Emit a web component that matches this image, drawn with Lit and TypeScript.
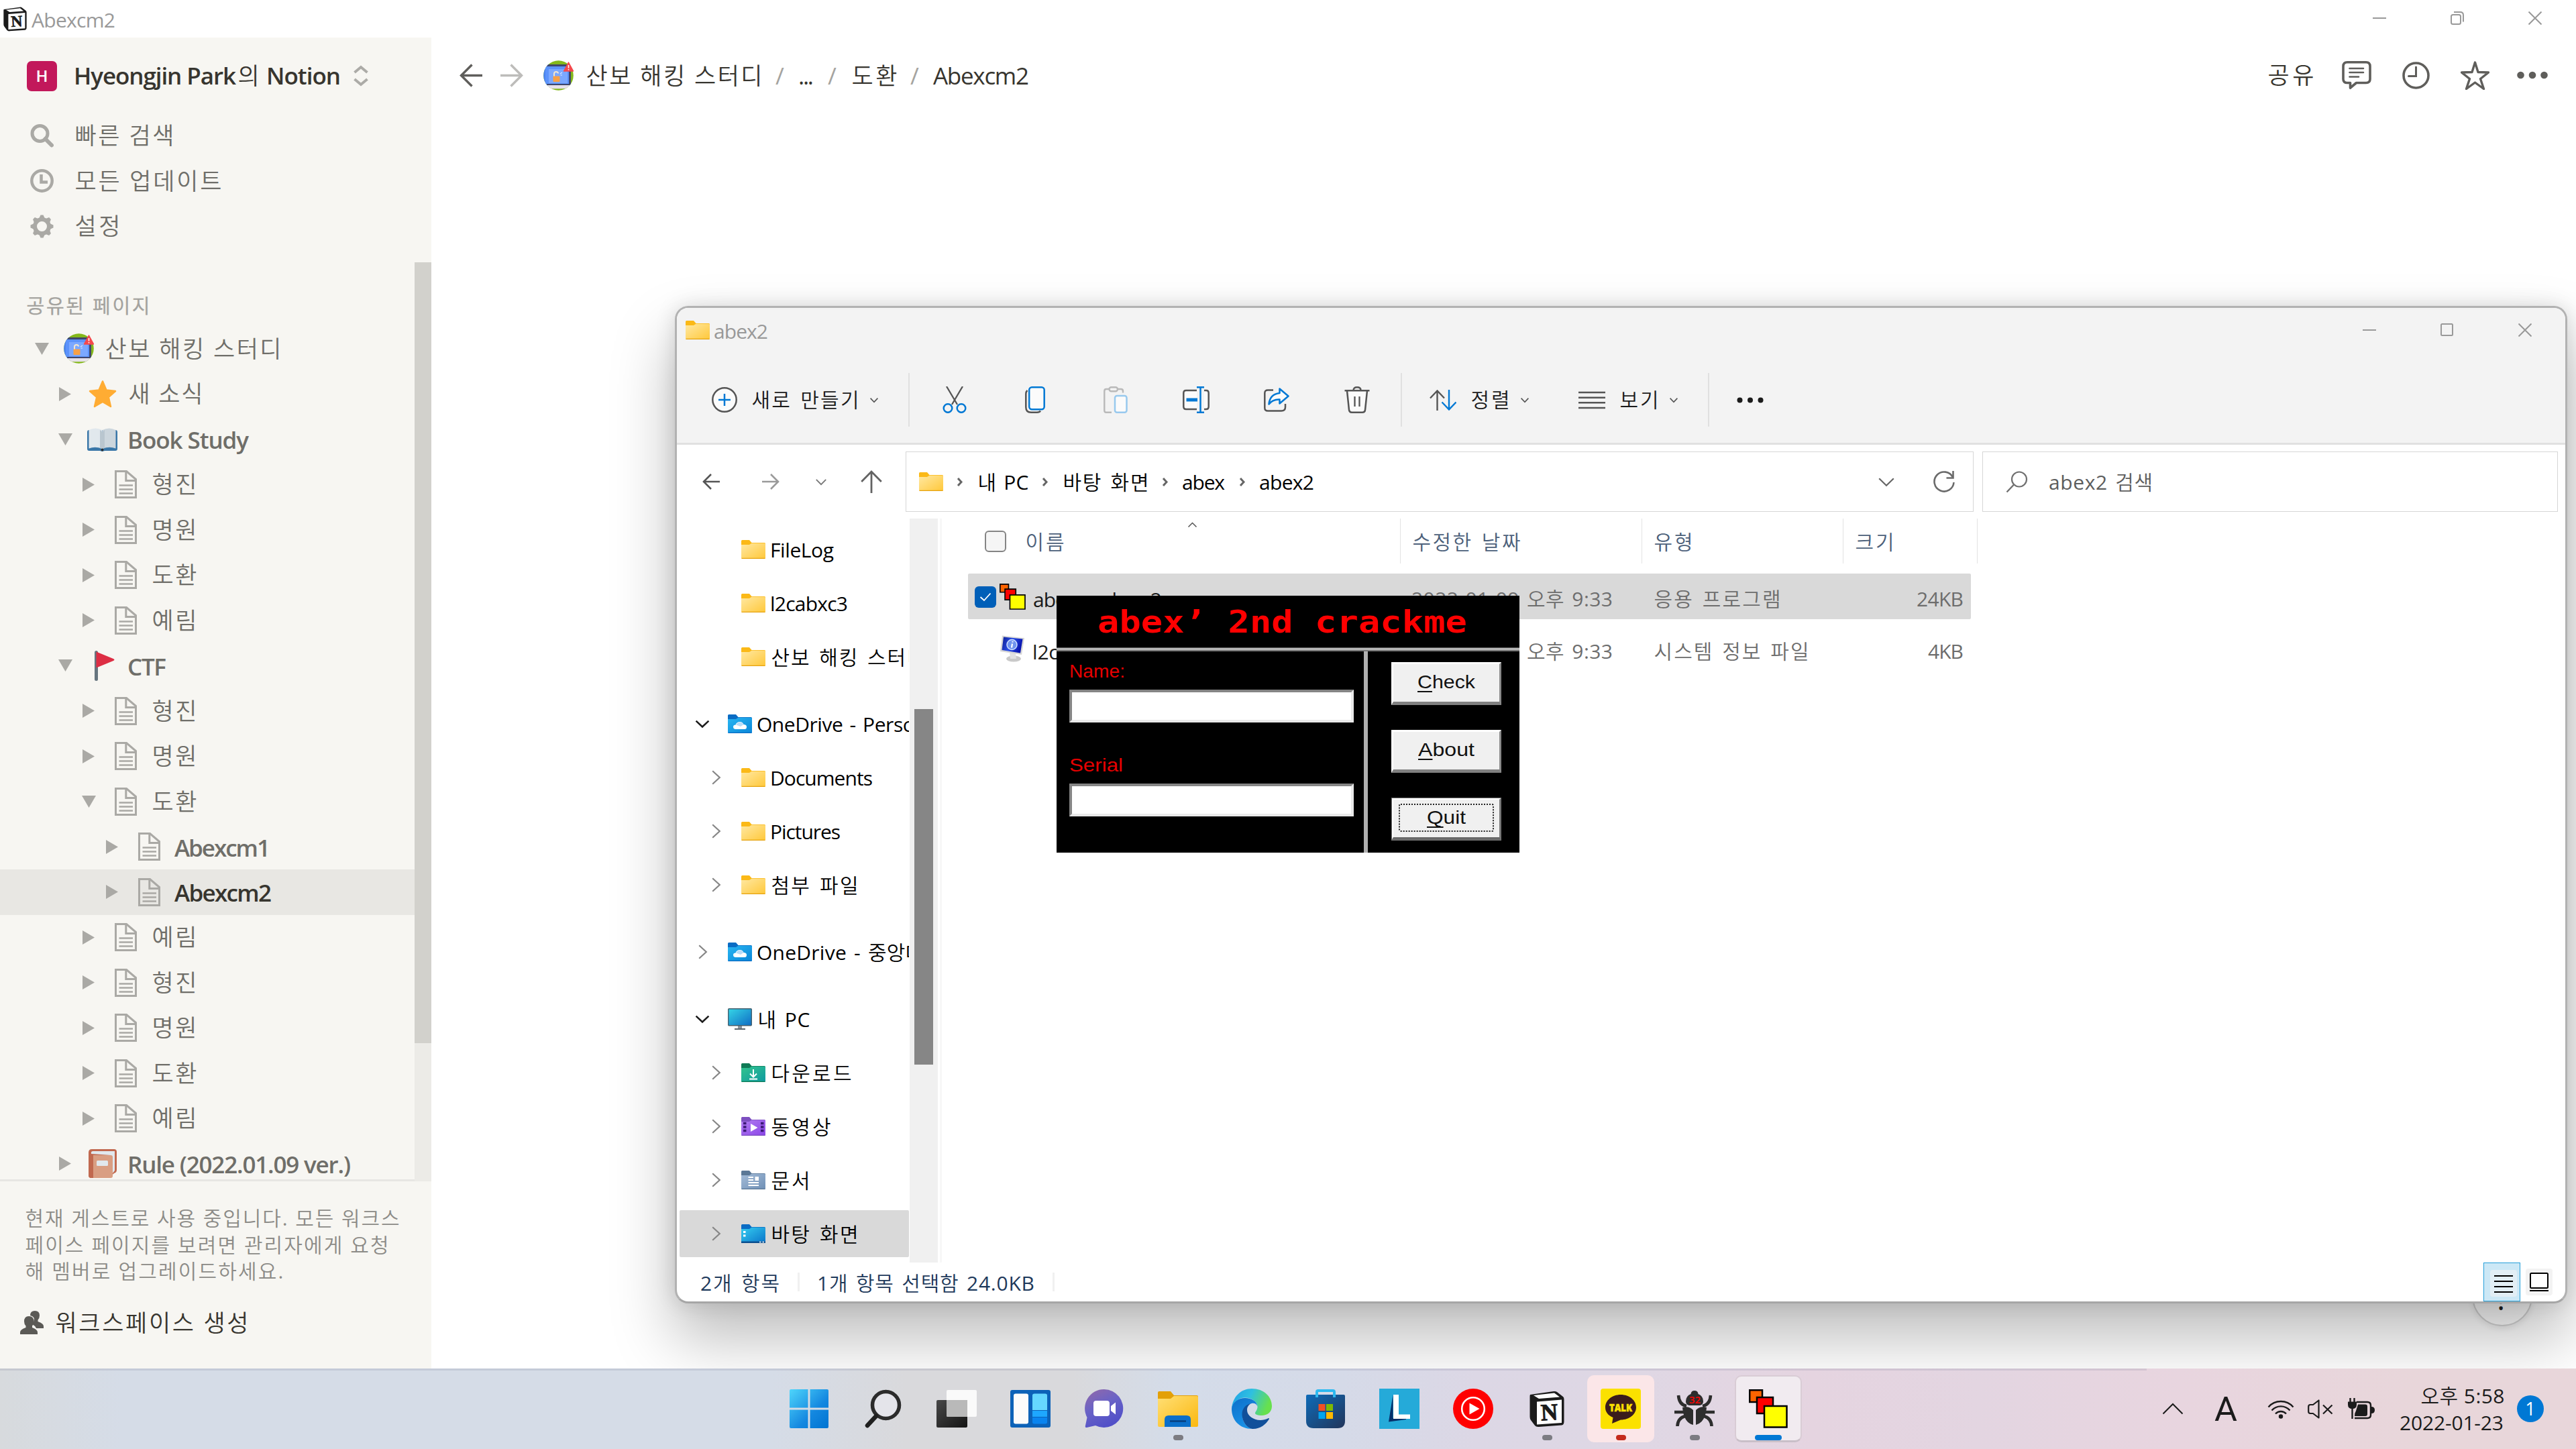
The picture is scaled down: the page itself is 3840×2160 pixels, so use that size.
import { LitElement, html, css, svg, nothing } from "lit";
import { customElement, property, query } from "lit/decorators.js";
import { classMap } from "lit/directives/class-map.js";

/** Label that tunes its tracking (or its horizontal scale) so the text fills a given width. */
@customElement("fit-label")
class FitLabel extends LitElement {
  static styles = css`
    :host { display: inline-block; flex: none; white-space: pre; }
    .run { display: inline-block; transform-origin: 0 50%; }
    .run.hangul { margin-left: 1.5px; }
  `;
  @property({ type: Number }) w = 0;
  @property({ type: Boolean }) stretch = false;
  @query(".run") run!: HTMLElement;

  firstUpdated() {
    const text = this.textContent ?? "";
    const natural = this.run.getBoundingClientRect().width;
    this.style.width = `${this.w}px`;
    if (/^[\uac00-\ud7a3]/.test(text)) this.run.classList.add("hangul");
    if (!natural || !text.length) return;
    if (this.stretch) this.run.style.transform = `scaleX(${this.w / natural})`;
    else this.run.style.letterSpacing = `${(this.w - natural) / Math.max(1, text.length - 1)}px`;
  }
  render() {
    return html`<span class="run"><slot></slot></span>`;
  }
}

const pic = (w: number, h: number, body: unknown) =>
  html`<svg class="pic" width=${w} height=${h} viewBox="0 0 ${w} ${h}" fill="none">${body}</svg>`;

/* ---------- window controls ---------- */
const winMin = () => pic(20, 20, svg`<path d="M0 10H20" stroke="#999" stroke-width="2"/>`);
const winRestore = () => pic(20, 20, svg`<rect x="1" y="5" width="14" height="14" rx="2.5" stroke="#999" stroke-width="2"/><path d="M5 1H14.5Q19 1 19 5.500V15.500" stroke="#999" stroke-width="2"/>`);
const winMax = () => pic(20, 20, svg`<rect x="1" y="1" width="17" height="17" rx="1.500" stroke="#999" stroke-width="2"/>`);
const winClose = () => pic(20, 20, svg`<path d="M0.500 0.500L19.500 19.500M19.500 0.500L0.500 19.500" stroke="#999" stroke-width="2"/>`);

/* ---------- notion icons ---------- */
const notionLogo = (w: number, h: number) => html`<svg class="pic" width=${w} height=${h} viewBox="0 0 52 55" fill="none">
  <path d="M1 6L36 1Q39 .500 41 2L50 9Q51.500 10 51.500 13V46Q51.500 51 48 51.500L14 54Q10 54.500 8 52L2 44Q.500 42 .500 39V9Q.500 6.500 1 6Z" fill="#1b1b1b"/>
  <path d="M6 7L37 3.500L45 9.500L14 12Z" fill="#fff"/>
  <path d="M11 16.500L48 13.500V48L11 50.500Z" fill="#fff"/>
  <text x="29.500" y="44" text-anchor="middle" font-family="Liberation Serif, serif" font-weight="700" font-size="35" fill="#1b1b1b" stroke="#1b1b1b" stroke-width="1" transform="rotate(-3 29 32)">N</text>
</svg>`;

const upDown = () => pic(22, 32, svg`<path d="M1.500 11L11 3L20.500 11M1.500 21L11 29L20.500 21" stroke="#acaba7" stroke-width="4"/>`);
const searchGlyph = () => pic(35, 35, svg`<circle cx="14.500" cy="14" r="11.500" stroke="#aaa9a5" stroke-width="5"/><path d="M22.500 22L32 31.500" stroke="#aaa9a5" stroke-width="6" stroke-linecap="round"/>`);
const clockGlyph = () => pic(35, 35, svg`<circle cx="17.500" cy="17.500" r="15.200" stroke="#aaa9a5" stroke-width="4.500"/><path d="M16.500 8V19.500H26" stroke="#aaa9a5" stroke-width="4.500"/>`);
const gearGlyph = () => pic(35, 35, svg`<circle cx="17.500" cy="17.500" r="10.500" stroke="#aaa9a5" stroke-width="6"/>
  ${[0, 45, 90, 135, 180, 225, 270, 315].map((a) => svg`<path d="M13 6L15.500 .500H19.500L22 6Z" fill="#aaa9a5" transform="rotate(${a} 17.500 17.500)"/>`)}`);
const groupBadge = () => html`<svg class="pic" width="45" height="45" viewBox="0 0 45 45" fill="none">
  <defs><clipPath id="gb"><circle cx="22.500" cy="22.500" r="22.300"/></clipPath></defs>
  <g clip-path="url(#gb)">
    <rect width="45" height="45" fill="#84b81a"/>
    <path d="M0 6H17V38H0Z" fill="#4b83f0"/>
    <path d="M5 6H37L41 10V37H5Z" fill="#40476b"/>
    <rect x="3" y="9" width="35" height="26" fill="#5b92fb"/>
    <rect x="8" y="13" width="28" height="21" fill="#7ba8ff"/>
    <path d="M0 37H42V41Q30 43 0 42Z" fill="#e6e0ea"/>
    <path d="M16 25V20Q16 17 19 17Q22 17 22 19.500" stroke="#f4e6cf" stroke-width="2"/>
    <rect x="14.500" y="23.500" width="10" height="8.500" rx="1" fill="#f7a047"/>
    <path d="M25 20L28 18M25.500 22H28" stroke="#dfe9ff" stroke-width="1.200"/>
  </g>
  <path d="M37.500 3L44.500 16H30.500Z" fill="#f4484c" stroke="#f4484c" stroke-width="1.500" stroke-linejoin="round"/>
  <path d="M37.500 7V11.500M37.500 13V14.500" stroke="#fff" stroke-width="1.600"/>
</svg>`;
const starEmoji = () => html`<svg class="pic" width="42" height="42" viewBox="0 0 42 42"><path d="M21 2.500L26.500 15.500L40 17L29.800 26L33 40L21 33L9 40L12.200 26L2 17L15.500 15.500Z" fill="#ffac33" stroke="#ffac33" stroke-width="2.500" stroke-linejoin="round"/></svg>`;
const bookEmoji = () => pic(45, 36, svg`<path d="M0 7Q0 4 3 4H42Q45 4 45 7V32Q45 35 42 35H26L22.500 36L19 35H3Q0 35 0 32Z" fill="#3a77a8"/>
  <path d="M2.500 4Q12 -1 22.500 4V32Q12 28 2.500 31.500Z" fill="#e1e8ed"/><path d="M42.500 4Q33 -1 22.500 4V32Q33 28 42.500 31.500Z" fill="#ccd6dd"/><path d="M19 4Q22 5 22.500 8V32Q20 31 19 31ZM26 4Q23 5 22.500 8V32Q25 31 26 31Z" fill="#b9c6cf"/><circle cx="22.500" cy="33.500" r="2" fill="#292f33"/>`);
const flagEmoji = () => pic(45, 45, svg`<path d="M13.500 2.500V42.500" stroke="#66757f" stroke-width="5" stroke-linecap="round"/><path d="M13.500 1.500L39 12Q42 13.500 39 15L13.500 25.500Z" fill="#dd2e44"/>`);
const ruleEmoji = () => pic(42, 45, svg`<path d="M0 6Q0 1 5 1H38Q42 1 42 5V32Q42 36 38 37L30 44H4Q0 44 0 40Z" fill="#c1694f"/><path d="M4 8Q3 4 7 4H39V33L35 38L33 10Z" fill="#e1e8ed"/><path d="M7 10H33Q36 10 36 13V41Q36 44 33 44H7Z" fill="#d99e82"/><path d="M0 6V40Q0 44 4 44H7V10Q2 9 1.500 5Z" fill="#c1694f"/><rect x="12" y="18" width="17" height="8" rx="1.500" fill="#e1e8ed"/>`);
const docGlyph = () => pic(33, 42, svg`<path d="M1.500 1.500H17.500L31.500 13.500V40.500H1.500Z" stroke="#aaa9a5" stroke-width="3"/><path d="M16.800 1.500V15.500H31.500" stroke="#aaa9a5" stroke-width="3"/><path d="M6.500 22.500H27M6.500 28.500H27M6.500 34.500H27" stroke="#aaa9a5" stroke-width="2.500"/>`);
const triangle = (open: boolean) => open
  ? pic(21, 18, svg`<path d="M0 0H21L10.500 18Z" fill="#aaa9a5"/>`)
  : pic(18, 21, svg`<path d="M0 0L18 10.500L0 21Z" fill="#aaa9a5"/>`);
const peopleGlyph = () => pic(35, 36, svg`<path d="M22 1Q29 1 29 8Q29 12 26.500 14.500V17Q35 20 35 24V27H24Q22 23 18 21Q21 17 21 13Q20 9 15 8Q15 1 22 1Z" fill="#5b5a56"/><path d="M13 9Q20.500 9 20.500 17Q20.500 21 18 23.500V26Q26 29 26 33V36H0V33Q0 29 8.500 26V23.500Q6 21 6 17Q6 9 13 9Z" fill="#5b5a56"/>`);
const arrowGlyph = (color: string, flip: boolean) => pic(35, 35, svg`<g transform=${flip ? "translate(35 0) scale(-1 1)" : ""}><path d="M34 17.500H3M18.500 1.500L2.500 17.500L18.500 33.500" stroke=${color} stroke-width="3.400"/></g>`);
const commentGlyph = () => pic(44, 42, svg`<path d="M8 1.800H36Q42 1.800 42 8V27Q42 32.500 36 32.500H21.500L12.500 40V32.500H8Q2 32.500 2 27V8Q2 1.800 8 1.800Z" stroke="#5f5e5b" stroke-width="3.600" stroke-linejoin="round"/><path d="M11.500 11H32M11.500 17H32M11.500 23.500H25" stroke="#5f5e5b" stroke-width="2.600" stroke-linecap="round"/>`);
const historyGlyph = () => pic(41, 41, svg`<circle cx="20.500" cy="20.500" r="18.500" stroke="#5f5e5b" stroke-width="3.600"/><path d="M20.500 8V21.500H9.500" stroke="#5f5e5b" stroke-width="3" stroke-linecap="round"/>`);
const starGlyph = () => pic(43, 43, svg`<path d="M21.500 2L26 16.500L41.500 17L29.500 26.500L34.500 41.500L21.500 32L8.500 41.500L13.500 26.500L1.500 17L17 16.500Z" stroke="#5f5e5b" stroke-width="3.400" stroke-linejoin="round"/>`);
const dotsGlyph = () => pic(46, 12, svg`<circle cx="5.500" cy="6" r="5.300" fill="#5f5e5b"/><circle cx="23" cy="6" r="5.300" fill="#5f5e5b"/><circle cx="40.500" cy="6" r="5.300" fill="#5f5e5b"/>`);

/* ---------- explorer icons ---------- */
const folder = () => html`<svg class="pic" width="36" height="28" viewBox="0 0 36 28" fill="none">
  <defs><linearGradient id="fo" x1="0" y1="0" x2="1" y2="1"><stop offset="0" stop-color="#ffe8a2"/><stop offset="1" stop-color="#ffc83a"/></linearGradient></defs>
  <path d="M0 1.500Q0 0 1.500 0H12L15.500 4H34.500Q36 4 36 5.500V10H0Z" fill="#fbb917"/><path d="M0 7H12L15.500 4.800H34.500Q36 4.800 36 6.300V26.500Q36 28 34.500 28H1.500Q0 28 0 26.500Z" fill="url(#fo)"/><path d="M.500 27.400H35.500" stroke="#e5a20f" stroke-width="1.200"/></svg>`;
const tintFolder = (id: string, tab: string, a: string, b: string, mark: unknown) => html`<svg class="pic" width="36" height="28" viewBox="0 0 36 28" fill="none">
  <defs><linearGradient id=${id} x1="0" y1="0" x2="1" y2="1"><stop offset="0" stop-color=${a}/><stop offset="1" stop-color=${b}/></linearGradient></defs>
  <path d="M0 1.500Q0 0 1.500 0H12L15.500 4H34.500Q36 4 36 5.500V12H0Z" fill=${tab}/><path d="M0 7H12L15.500 4.800H34.500Q36 4.800 36 6.300V26.500Q36 28 34.500 28H1.500Q0 28 0 26.500Z" fill="url(#${id})"/><path d="M.500 27.400H35.500" stroke=${tab} stroke-width="1.200"/>${mark}</svg>`;
const cloudFolder = () => tintFolder("fc", "#0a6cc4", "#29b6f2", "#0a86d8", svg`<path d="M11 22Q8 21.500 8 18.500Q8 15.500 11.500 15.500Q13 11 18 11Q22 11 23.500 15Q28 15 28 18.500Q28 22 25 22Z" fill="#fff"/><path d="M12 15.500Q15 11 19 11.500Q22 12 23.500 15L19 18Z" fill="#b9dcf7"/>`);
const downFolder = () => tintFolder("fd", "#0f7a55", "#32c48d", "#0f9aa0", svg`<path d="M18 9V20M13 15.500L18 20.500L23 15.500M12 23.500H24" stroke="#fff" stroke-width="2"/>`);
const videoFolder = () => tintFolder("fv", "#7d4fc0", "#b27cf0", "#8a45e8", svg`<path d="M14 10L24.500 16L14 22Z" fill="#fff"/><path d="M3 9.500H7.500M3 15H7.500M3 20.500H7.500M29 9.500H33.500M29 15H33.500M29 20.500H33.500" stroke="#3d1a78" stroke-width="3.500"/>`);
const docFolder = () => tintFolder("ff", "#5b7896", "#a4bcd8", "#6f8fb5", svg`<path d="M10.500 10H18M10.500 14H18M10.500 18H26M10.500 22H26" stroke="#fff" stroke-width="2"/><rect x="20.500" y="9" width="5.500" height="6" fill="#fff"/>`);
const deskFolder = () => tintFolder("fk", "#0a6cc4", "#35cdf0", "#0a74c9", svg`<path d="M3 11.500H6.500M3 17H6.500" stroke="#fff" stroke-width="3"/><path d="M0 25.500H36V28H0Z" fill="#0b4f8f"/><path d="M27 26.500H29.500M31.500 26.500H34" stroke="#fff" stroke-width="1.500"/>`);
const pcIcon = () => html`<svg class="pic" width="36" height="32" viewBox="0 0 36 32" fill="none"><defs><linearGradient id="pc" x1="0" y1="0" x2="1" y2="1"><stop offset="0" stop-color="#35d6e6"/><stop offset="1" stop-color="#0f6cc4"/></linearGradient></defs>
  <path d="M15 26H21V30H15Z" fill="#8a949c"/><path d="M10 31H26" stroke="#5b666e" stroke-width="2"/><rect x=".700" y=".700" width="34.600" height="25" rx="1" fill="url(#pc)" stroke="#45606e" stroke-width="1.400"/></svg>`;

const chev = (dir: "down" | "right" | "up", w: number, h: number, color: string, sw: number) => {
  const m = sw;
  const d = dir === "down" ? `M${m} ${m}L${w / 2} ${h - m}L${w - m} ${m}`
    : dir === "up" ? `M${m} ${h - m}L${w / 2} ${m}L${w - m} ${h - m}`
    : `M${m} ${m}L${w - m} ${h / 2}L${m} ${h - m}`;
  return pic(w, h, svg`<path d=${d} stroke=${color} stroke-width=${sw}/>`);
};
const newGlyph = () => pic(38, 38, svg`<circle cx="19" cy="19" r="17.700" fill="#fbfbfb" stroke="#555" stroke-width="2.500"/><path d="M19 10V28M10 19H28" stroke="#0078d4" stroke-width="2.500"/>`);
const cutGlyph = () => pic(36, 40, svg`<path d="M6 0L22 27M30 0L14 27" stroke="#555" stroke-width="2.300"/><circle cx="8" cy="32.500" r="6.300" stroke="#0078d4" stroke-width="2.500"/><circle cx="28" cy="32.500" r="6.300" stroke="#0078d4" stroke-width="2.500"/>`);
const copyGlyph = () => pic(30, 40, svg`<path d="M3.500 6Q1.300 8 1.300 11V31Q1.300 38.700 9 38.700H18Q21.500 38.700 23 36.500" stroke="#555" stroke-width="2.500"/><rect x="6.200" y="1.300" width="22.500" height="33" rx="4" fill="#fbfbfb" stroke="#0078d4" stroke-width="2.500"/>`);
const pasteGlyph = () => pic(36, 40, svg`<path d="M8 4H4Q1.300 4 1.300 7V36Q1.300 38.700 4 38.700H12M22 4H26Q29 4 29 7V9.500" stroke="#b9b9b9" stroke-width="2.400"/><rect x="8.500" y="1.200" width="12.500" height="6" rx="3" stroke="#b9b9b9" stroke-width="2.400"/><rect x="17" y="14" width="17.500" height="24.700" rx="3" fill="#fbfbfb" stroke="#98c9ee" stroke-width="2.500"/>`);
const renameGlyph = () => pic(40, 40, svg`<path d="M21 6H5Q1.300 6 1.300 10V30Q1.300 34 5 34H21M32 6H35Q38.700 6 38.700 10V30Q38.700 34 35 34H32" fill="#fbfbfb" stroke="#555" stroke-width="2.500"/><path d="M5.500 20H22" stroke="#0078d4" stroke-width="5"/><path d="M21 1.300H32M21 38.700H32M26.500 1V39" stroke="#0078d4" stroke-width="2.500"/>`);
const shareGlyph = () => pic(38, 36, svg`<path d="M14 3.500H6Q1.300 3.500 1.300 8V30Q1.300 34.500 6 34.500H26Q32 34.500 32 29V24" fill="none" stroke="#555" stroke-width="2.500"/><path d="M23.500 1.500L36.500 12.500L23.500 23.500V17.500Q13 17 7.500 24.500Q9 9.500 23.500 8Z" fill="#fbfbfb" stroke="#0078d4" stroke-width="2.500" stroke-linejoin="round"/>`);
const trashGlyph = () => pic(38, 40, svg`<path d="M4 6.500L7 35Q7.400 38.700 11 38.700H27Q30.600 38.700 31 35L34 6.500" fill="#fbfbfb" stroke="#555" stroke-width="2.500"/><path d="M.500 6.300H37.500" stroke="#555" stroke-width="2.500"/><path d="M13.500 6Q13.500 1.300 19 1.300Q24.500 1.300 24.500 6" stroke="#555" stroke-width="2.500"/><path d="M15.500 15V30M22.500 15V30" stroke="#555" stroke-width="2.300"/>`);
const sortGlyph = () => pic(40, 31, svg`<path d="M11.500 31V2M1 12.500L11.500 1.500L22 12.500" stroke="#555" stroke-width="2.400"/><path d="M29 0V29M18.500 18.500L29 29.500L39.500 18.500" stroke="#0078d4" stroke-width="2.400"/>`);
const listGlyph = () => pic(40, 27, svg`<path d="M0 2H40M0 9.700H40M0 17.300H40M0 25H40" stroke="#555" stroke-width="2.600"/>`);
const moreGlyph = () => pic(40, 9, svg`<circle cx="4.500" cy="4.500" r="4" fill="#1b1b1b"/><circle cx="20" cy="4.500" r="4" fill="#1b1b1b"/><circle cx="35.500" cy="4.500" r="4" fill="#1b1b1b"/>`);
const navArrow = (color: string, flip: boolean) => pic(26, 24, svg`<g transform=${flip ? "translate(26 0) scale(-1 1)" : ""}><path d="M26 12H2M13 1L2 12L13 23" stroke=${color} stroke-width="2.600"/></g>`);
const upArrow = () => pic(32, 34, svg`<path d="M16 34V2M1.200 17L16 2L30.800 17" stroke="#636363" stroke-width="2.800"/>`);
const refreshGlyph = () => pic(32, 33, svg`<path d="M29 9.500A14.500 14.500 0 1 0 30.500 17" stroke="#6b6b6b" stroke-width="2.600"/><path d="M29.500 0V10.500H19.500" stroke="#6b6b6b" stroke-width="2.600"/>`);
const findGlyph = () => pic(33, 33, svg`<circle cx="20" cy="12.500" r="11" stroke="#707070" stroke-width="2.200"/><path d="M12 20.500L1.500 31.500" stroke="#707070" stroke-width="2.400"/>`);
const vbIcon = (w: number, h: number) => html`<svg class="pic" width=${w} height=${h} viewBox="0 0 58 58"><g stroke="#000" stroke-width="2.500"><path d="M1.200 1.200H20V19H1.200Z" fill="#ff6400"/><path d="M12 12H36V36H12Z" fill="#f00"/><path d="M23 25H56.500V56.500H23Z" fill="#ff0"/></g></svg>`;
const sysIcon = () => html`<svg class="pic" width="38" height="40" viewBox="0 0 38 40"><defs><linearGradient id="si" x1="0" y1="0" x2="1" y2=".300"><stop offset="0" stop-color="#0b1c8f"/><stop offset=".500" stop-color="#2a4fe8"/><stop offset="1" stop-color="#0a16b0"/></linearGradient></defs>
  <ellipse cx="21" cy="35" rx="11" ry="4.500" fill="#c9c9c9"/><path d="M15 26L24 27L25 35H16Z" fill="#e2e2e2"/><path d="M4 .500L37 4L33 29L1 24Z" fill="#d6d6d6"/><path d="M6 2.500L34.500 5.500L31 26.500L3.500 22Z" fill="url(#si)"/><circle cx="18.500" cy="14" r="7.500" fill="#6f93ee" stroke="#cfe0ff" stroke-width="1.500"/><path d="M19 12.500L18 18.500M19.500 9V10.500" stroke="#fff" stroke-width="2.200"/></svg>`;
const tick = () => pic(18, 14, svg`<path d="M1.500 7L7 12L16.500 1.500" stroke="#fff" stroke-width="1.800"/>`);

/* ---------- taskbar icons ---------- */
const tWin = () => html`<svg class="pic" width="58" height="58" viewBox="0 0 58 58"><defs><linearGradient id="tw" x1="0" y1="0" x2="1" y2="1"><stop offset="0" stop-color="#4fd5fb"/><stop offset=".600" stop-color="#1488e0"/><stop offset="1" stop-color="#0073d1"/></linearGradient></defs><path d="M2 0H27.500V27.500H0V2Q0 0 2 0ZM30.500 0H56Q58 0 58 2V27.500H30.500ZM0 30.500H27.500V58H2Q0 58 0 56ZM30.500 30.500H58V56Q58 58 56 58H30.500Z" fill="url(#tw)"/></svg>`;
const tSearch = () => pic(56, 58, svg`<circle cx="32.500" cy="23.500" r="20" fill="#e4e4ea" stroke="#2b2b2b" stroke-width="5.500"/><path d="M18 40L5 54" stroke="#1f1f1f" stroke-width="6.500" stroke-linecap="round"/>`);
const tTask = () => html`<svg class="pic" width="60" height="56" viewBox="0 0 60 56"><defs><linearGradient id="tt" x1="0" y1="0" x2="1" y2="1"><stop offset="0" stop-color="#484848"/><stop offset="1" stop-color="#141414"/></linearGradient></defs><rect x="0" y="15" width="46" height="41" rx="2" fill="url(#tt)"/><rect x="15" y="0" width="45" height="40" rx="2" fill="#fafafa"/><path d="M15 15H46V40H17Q15 40 15 38Z" fill="#b9b9b9"/></svg>`;
const tWidget = () => pic(60, 56, svg`<rect width="60" height="56" rx="3" fill="#0c62b8"/><rect x="5" y="5.500" width="22" height="45" rx="3" fill="#fbfbfb"/><path d="M33 8Q33 5.500 36 5.500H52Q55 5.500 55 8V30H33Z" fill="#66d8ff"/><rect x="33" y="31" width="22" height="9" fill="#1ea7ff"/><path d="M33 41H55V48Q55 50.500 52 50.500H36Q33 50.500 33 48Z" fill="#0a84ef"/>`);
const tChat = () => html`<svg class="pic" width="58" height="58" viewBox="0 0 58 58"><defs><linearGradient id="tc" x1="0" y1="0" x2=".500" y2="1"><stop offset="0" stop-color="#9469a8"/><stop offset=".500" stop-color="#6a63c6"/><stop offset="1" stop-color="#5150c8"/></linearGradient></defs><path d="M29 0A28.500 28.500 0 1 1 16 54L3 57Q0 57.500 1 54L3.500 42A28.500 28.500 0 0 1 29 0Z" fill="url(#tc)"/><rect x="13" y="17" width="24" height="23" rx="4" fill="#fff"/><path d="M39 25L46 19.500V37.500L39 32Z" fill="#fff"/></svg>`;
const tFiles = () => html`<svg class="pic" width="60" height="54" viewBox="0 0 60 54"><defs><linearGradient id="tf" x1="0" y1="0" x2="1" y2="1"><stop offset="0" stop-color="#ffdf75"/><stop offset="1" stop-color="#fbb80f"/></linearGradient></defs><path d="M0 3Q0 1 2 1H19L24 7H58Q60 7 60 9V20H0Z" fill="#e3a008"/><path d="M0 12H19L24 8H58Q60 8 60 10V52Q60 54 58 54H2Q0 54 0 52Z" fill="url(#tf)"/><path d="M10 54V43Q10 37 16 37H43Q49 37 49 43V54Z" fill="#0a6fca"/><path d="M18 45.500H42" stroke="#063f80" stroke-width="2.500"/></svg>`;
const tEdge = () => html`<svg class="pic" width="60" height="60" viewBox="0 0 60 60"><defs>
  <linearGradient id="ea" x1="0" y1="0" x2="1" y2=".300"><stop offset="0" stop-color="#1f9fe8"/><stop offset=".500" stop-color="#2fc0e0"/><stop offset="1" stop-color="#67e04e"/></linearGradient>
  <linearGradient id="eb" x1="0" y1="0" x2=".500" y2="1"><stop offset="0" stop-color="#0d6fc9"/><stop offset="1" stop-color="#1a93e8"/></linearGradient></defs>
  <path d="M0 31C1 12 14 0 30 0C48 0 60 12 60 26C60 35 53 40 45 40C39 40 35 38.500 35 36.500C35 34.500 38.500 32 38.500 27C38.500 20 31 13.500 20 13.500C10 13.500 2 21 0 31Z" fill="url(#ea)"/>
  <path d="M0 30C0 48 13 60 30 60C22 57 16 50 16 39C16 30 22 23.500 30 22C36 21 38 25 38.500 27C38 19 30 14 20 14C9 14 1 21 0 30Z" fill="url(#eb)"/>
  <path d="M15.500 38C15.500 50 24 60 32 60C43 60 51 53 55.500 46C56.500 44 55 43.500 54 44.500C51 46 47 47 43 47C32 47 23 40 23 32C23 27 25.500 24 29 22C21 23.500 15.500 30 15.500 38Z" fill="#11509a"/></svg>`;
const tStore = () => html`<svg class="pic" width="58" height="58" viewBox="0 0 58 58" fill="none"><defs><linearGradient id="ts" x1="0" y1="0" x2="1" y2="1"><stop offset="0" stop-color="#0e6bb8"/><stop offset="1" stop-color="#22355a"/></linearGradient></defs><path d="M0 10Q0 8 2 8H56Q58 8 58 10V47Q58 58 47 58H11Q0 58 0 47Z" fill="url(#ts)"/><path d="M16 12V4Q16 2 18 2H40Q42 2 42 4V12" stroke="#2db9f0" stroke-width="4"/><path d="M18.500 22H28.500V32H18.500Z" fill="#f25022"/><path d="M30 22H40V32H30Z" fill="#7fba00"/><path d="M18.500 34H28.500V44H18.500Z" fill="#00a4ef"/><path d="M30 34H40V44H30Z" fill="#ffb900"/></svg>`;
const tL = () => pic(60, 60, svg`<rect width="60" height="60" fill="#25aad9"/><path d="M20.500 9L14 49.500L40 46V44H20.500Z" fill="#06306b"/><path d="M21 9H29V38.500H46V45H21Z" fill="#fff"/>`);
const tMusic = () => pic(60, 60, svg`<circle cx="30" cy="30" r="30" fill="#f00"/><circle cx="30" cy="30" r="16.800" stroke="#fff" stroke-width="2.600"/><path d="M24.500 21.500L39.500 30L24.500 38.500Z" fill="#fff"/>`);
const tTalk = () => pic(60, 60, svg`<rect width="60" height="60" rx="4" fill="#fbe100"/><path d="M30 9C43 9 53 17.500 53 28C53 38 43 46.500 30 46.500L17 52L18.500 43C11 40 7 34.500 7 28C7 17.500 17 9 30 9Z" fill="#3b1c1c"/><text x="30" y="34" text-anchor="middle" textLength="34" lengthAdjust="spacingAndGlyphs" font-family="Open Sans, sans-serif" font-weight="800" font-size="15.500" fill="#fbe100" stroke="#fbe100" stroke-width=".600">TALK</text>`);
const tBug = () => pic(60, 56, svg`<path d="M6 8Q7 22 18 24M54 8Q53 22 42 24M0 33H14M60 33H46M4.500 54Q5 42 16 39M55.500 54Q55 42 44 39" stroke="#2d2d2d" stroke-width="4.600"/><path d="M30 1Q35 1 35.500 6Q43 9 43 17Q43 22 38 23H22Q17 22 17 17Q17 9 24.500 6Q25 1 30 1Z" fill="#2d2d2d"/><path d="M12 26Q22 23.500 28 30V52Q14 49 12 26ZM48 26Q38 23.500 32 30V52Q46 49 48 26Z" fill="#2d2d2d"/><text x="30.500" y="20" text-anchor="middle" font-family="Open Sans, sans-serif" font-size="15" font-weight="600" fill="#f00">32</text>`);

const trayUp = () => pic(32, 18, svg`<path d="M1.500 16.500L16 2L30.500 16.500" stroke="#1b1b1b" stroke-width="2"/>`);
const wifi = () => pic(40, 30, svg`<path d="M1.500 12.500A24.500 24.500 0 0 1 38.500 12.500M6.500 17.500A18 18 0 0 1 33.500 17.500M12 22.500A11 11 0 0 1 28 22.500" stroke="#1b1b1b" stroke-width="2.400"/><circle cx="20" cy="26.500" r="3.200" fill="#1b1b1b"/>`);
const mute = () => pic(38, 29, svg`<path d="M16.500 1.500V27.500L8 21H4Q1.200 21 1.200 18V11Q1.200 8 4 8H8Z" stroke="#1b1b1b" stroke-width="2.200" stroke-linejoin="round"/><path d="M23 8.500L36.500 21.500M36.500 8.500L23 21.500" stroke="#1b1b1b" stroke-width="2.200"/>`);
const battery = () => pic(40, 32, svg`<path d="M13 6H29Q34 6 34 11V25Q34 30 29 30H10" stroke="#1b1b1b" stroke-width="2.400"/><path d="M35 13Q40 13 40 18Q40 23 35 23Z" fill="#1b1b1b"/><path d="M15 9.500H26Q29 9.500 29 12.500V24Q29 27 26 27H10Q10 22 12 19Z" fill="#1b1b1b"/><path d="M0 5.500H13V10Q13 16 6.500 16Q0 16 0 10Z" fill="#1b1b1b"/><path d="M3.500 0V6M9.500 0V6M6.500 15V31" stroke="#1b1b1b" stroke-width="2.400"/>`);

type TreeRow = { lvl: number; open?: boolean; icon: () => unknown; text: string; w: number; active?: boolean; latin?: boolean };
const page = (text: string, extra: Partial<TreeRow> = {}): TreeRow => ({ lvl: 2, icon: docGlyph, text, w: 67, ...extra });
const TREE: TreeRow[] = [
  { lvl: 0, open: true, icon: groupBadge, text: "산보 해킹 스터디", w: 263 },
  { lvl: 1, icon: starEmoji, text: "새 소식", w: 111 },
  { lvl: 1, open: true, icon: bookEmoji, text: "Book Study", w: 181, latin: true },
  page("형진"), page("명원"), page("도환"), page("예림"),
  { lvl: 1, open: true, icon: flagEmoji, text: "CTF", w: 58, latin: true },
  page("형진"), page("명원"), page("도환", { open: true }),
  page("Abexcm1", { lvl: 3, w: 143, latin: true }),
  page("Abexcm2", { lvl: 3, w: 145, latin: true, active: true }),
  page("예림"), page("형진"), page("명원"), page("도환"), page("예림"),
  { lvl: 1, icon: ruleEmoji, text: "Rule (2022.01.09 ver.)", w: 333, latin: true },
];

@customElement("notion-window")
class NotionWindow extends LitElement {
  static styles = css`
    :host { display: flex; flex-direction: column; background: #fff; color: #37352f; font-size: 35px; line-height: 50px; }
    .pic { display: block; flex: none; }
    .title { height: 56px; display: flex; align-items: center; gap: 7px; padding: 0 51px 0 5px; box-sizing: border-box; font-size: 30px; line-height: 56px; color: #999; }
    .title .name { padding-top: 3px; }
    .ctl { margin-left: auto; display: flex; gap: 96px; padding-top: 0; height: 54px; align-items: center; align-self: flex-start; }
    .body { flex: 1; display: flex; min-height: 0; }
    .side { width: 643px; background: #f7f6f2; display: flex; flex-direction: column; }
    .ws { height: 112.25px; box-sizing: border-box; padding: 2px 0 0 40px; display: flex; align-items: center; }
    .badge { width: 45px; height: 45px; border-radius: 7px; background: #c2185b; color: #fff; font: 500 24px/46px Roboto, sans-serif; text-align: center; margin-right: 25px; }
    .strong { font-weight: 600; }
    .ws .mid { margin: 0 11px 0 1px; }
    .ws .pic { margin-left: 19px; }
    .quick { height: 67.5px; padding-left: 45px; display: flex; align-items: center; gap: 30px; color: #6f6e69; }
    .scroll { margin-top: 20.25px; height: 1370px; display: flex; }
    .list { width: 618px; box-sizing: border-box; border-bottom: 3px solid #e7e6e3; overflow: hidden; }
    .cap { padding: 35px 0 0 38px; height: 60px; line-height: 60px; font-size: 29px; font-weight: 500; color: #a3a29e; display: flex; align-items: center; -webkit-text-stroke: .5px; }
    .bar { width: 25px; background: #ecebe7; }
    .thumb { height: 1164px; background: #d2d1cc; }
    .row { height: 67.5px; display: flex; align-items: center; color: #6f6e69; padding-left: 45px; }
    .l1 { padding-left: 80px; }
    .l2 { padding-left: 115px; }
    .l3 { padding-left: 150px; }
    .row.active { background: #e8e7e3; color: #37352f; }
    .tri { width: 34px; display: flex; justify-content: center; }
    .ico { width: 45px; margin: 0 15px 0 16px; display: flex; justify-content: center; }
    .latin { font-weight: 600; }
    .latin fit-label { padding-top: 3px; }
    .foot { padding: 35px 0 0 36px; color: #8c8b87; font-size: 30px; line-height: 39.7px; display: flex; flex-direction: column; }
    .create { display: flex; align-items: center; gap: 16px; padding: 30px 0 0 30px; }
    .create fit-label { padding-top: 2px; }
    .main { flex: 1; }
    .top { height: 112px; box-sizing: border-box; display: flex; align-items: center; padding: 0 42px; }
    .crumbs { display: flex; gap: 19.5px; align-items: center; margin-left: 17px; padding-top: 2px; }
    .crumbs .sl { color: #a5a4a0; width: 16px; text-align: center; }
    .fwd { margin: 0 30px 0 25px; }
    .acts { margin-left: auto; display: flex; align-items: center; gap: 46px; }
    .acts .pic:first-of-type { margin-left: -3px; }
    .acts .pic:last-of-type { margin-left: -5px; }
  `;
  render() {
    return html`
      <div class="title">${notionLogo(35, 37)}<fit-label class="name" .w=${125}>Abexcm2</fit-label>
        <div class="ctl">${winMin()}${winRestore()}${winClose()}</div></div>
      <div class="body">
        <div class="side">
          <div class="ws"><div class="badge">H</div>
            <fit-label class="strong" .w=${242}>Hyeongjin Park</fit-label><fit-label class="mid" .w=${33}>의</fit-label><fit-label class="strong" .w=${111}>Notion</fit-label>${upDown()}</div>
          <div class="quick">${searchGlyph()}<fit-label .w=${148}>빠른 검색</fit-label></div>
          <div class="quick">${clockGlyph()}<fit-label .w=${219}>모든 업데이트</fit-label></div>
          <div class="quick">${gearGlyph()}<fit-label .w=${68}>설정</fit-label></div>
          <div class="scroll">
            <div class="list">
              <div class="cap"><fit-label .w=${184}>공유된 페이지</fit-label></div>
              ${TREE.map((r) => html`<div class=${classMap({ row: true, [`l${r.lvl}`]: true, active: !!r.active, latin: !!r.latin })}>
                <div class="tri">${triangle(!!r.open)}</div><div class="ico">${r.icon()}</div><fit-label .w=${r.w}>${r.text}</fit-label></div>`)}
            </div>
            <div class="bar"><div class="thumb"></div></div>
          </div>
          <div class="foot">
            <fit-label .w=${558}>현재 게스트로 사용 중입니다. 모든 워크스</fit-label>
            <fit-label .w=${542}>페이스 페이지를 보려면 관리자에게 요청</fit-label>
            <fit-label .w=${385}>해 멤버로 업그레이드하세요.</fit-label>
          </div>
          <div class="create">${peopleGlyph()}<fit-label .w=${288}>워크스페이스 생성</fit-label></div>
        </div>
        <div class="main">
          <div class="top">${arrowGlyph("#5f5e5b", false)}<div class="fwd">${arrowGlyph("#bdbcba", true)}</div>${groupBadge()}
            <div class="crumbs"><fit-label .w=${263}>산보 해킹 스터디</fit-label><span class="sl">/</span><fit-label .w=${23}>...</fit-label><span class="sl">/</span><fit-label .w=${68}>도환</fit-label><span class="sl">/</span><fit-label .w=${143}>Abexcm2</fit-label></div>
            <div class="acts"><fit-label .w=${69}>공유</fit-label>${commentGlyph()}${historyGlyph()}${starGlyph()}${dotsGlyph()}</div>
          </div>
        </div>
      </div>`;
  }
}

type NavRow = { lvl: number; state: "open" | "closed" | "none"; icon: () => unknown; text: string; w: number; gap?: boolean; sel?: boolean };
const NAV: NavRow[] = [
  { lvl: 1, state: "none", icon: folder, text: "FileLog", w: 95 },
  { lvl: 1, state: "none", icon: folder, text: "l2cabxc3", w: 116 },
  { lvl: 1, state: "none", icon: folder, text: "산보 해킹 스터디", w: 230 },
  { lvl: 0, state: "open", icon: cloudFolder, text: "OneDrive - Personal", w: 277, gap: true },
  { lvl: 1, state: "closed", icon: folder, text: "Documents", w: 153 },
  { lvl: 1, state: "closed", icon: folder, text: "Pictures", w: 105 },
  { lvl: 1, state: "closed", icon: folder, text: "첨부 파일", w: 130 },
  { lvl: 0, state: "closed", icon: cloudFolder, text: "OneDrive - 중앙대학교", w: 305, gap: true },
  { lvl: 0, state: "open", icon: pcIcon, text: "내 PC", w: 78, gap: true },
  { lvl: 1, state: "closed", icon: downFolder, text: "다운로드", w: 120 },
  { lvl: 1, state: "closed", icon: videoFolder, text: "동영상", w: 89 },
  { lvl: 1, state: "closed", icon: docFolder, text: "문서", w: 58 },
  { lvl: 1, state: "closed", icon: deskFolder, text: "바탕 화면", w: 130, sel: true },
];
const PATH: [string, number][] = [["내 PC", 76], ["바탕 화면", 128], ["abex", 64], ["abex2", 82]];

@customElement("explorer-window")
class ExplorerWindow extends LitElement {
  static styles = css`
    :host { display: flex; flex-direction: column; box-sizing: border-box; border: 3px solid #b2b2b2; border-bottom-color: #a6a6a6; border-radius: 20px; overflow: hidden; background: #fff; background-clip: padding-box; color: #000; font-size: 30px; line-height: 44px; word-spacing: 3px;
      box-shadow: 0 0 30px rgba(0,0,0,.13), 0 50px 90px 4px rgba(0,0,0,.25); }
    .pic { display: block; flex: none; }
    .title { height: 66px; background: #f3f3f3; display: flex; align-items: center; padding: 0 50px 0 13px; color: #999; }
    .title fit-label { margin: 3px 0 0 6px; }
    .ctl { margin-left: auto; display: flex; gap: 96px; }
    .tools { height: 138px; box-sizing: border-box; border-bottom: 3px solid #e1e1e1; background: #f3f3f3; padding: 7px 0 0 52px; display: flex; align-items: center; color: #1b1b1b; }
    .sep { width: 2px; height: 80px; background: #e0e0e0; flex: none; }
    .cell { width: 120px; display: flex; justify-content: center; }
    .m6 { margin-left: 6px; } .m17 { margin-left: 17px; } .m20 { margin-left: 20px; } .m41 { margin-left: 41px; } .m44 { margin-left: 44px; } .m73 { margin-left: 73px; }
    .m5 { margin-left: 5px; } .m7 { margin-left: 7px; }
    .addr { height: 110px; display: flex; align-items: center; padding-left: 38px; }
    .addr .fw { margin-left: 63px; } .addr .dn { margin-left: 53px; } .addr .up { margin-left: 50px; }
    .box { height: 90px; box-sizing: border-box; border: 1px solid #d6d6d6; display: flex; align-items: center; }
    .path { margin-left: 35px; width: 1592px; padding: 0 27px 0 19px; gap: 20px; }
    .path > .pic:first-of-type { margin-right: -1px; }
    .path fit-label, .find fit-label { padding-top: 2px; }
    .path .end { margin-left: auto; display: flex; align-items: center; gap: 57px; }
    .find { margin-left: 13px; width: 858px; padding-left: 34px; gap: 31px; color: #5d5d5d; }
    .mid { flex: 1; display: flex; min-height: 0; }
    .nav { width: 346px; overflow: hidden; padding-top: 6px; box-sizing: border-box; }
    .nrow { height: 70px; margin: 5px 0 10px 4px; display: flex; align-items: center; padding-left: 20px; border-radius: 2px; }
    .nrow + .nrow { margin-top: 10px; }
    .nrow.in { padding-left: 40px; }
    .nrow.gap { margin-top: 30px; }
    .nrow.sel { background: #d9d9d9; }
    .nrow fit-label { margin: 1px 0 0 7px; }
    .nchev { flex: none; width: 28px; margin-right: 24px; display: flex; justify-content: center; }
    .track { width: 42px; margin-left: 1px; background: #f0f0f0; }
    .thumb { width: 28px; height: 530px; margin: 284px 0 0 7px; background: #868686; }
    .edge { width: 3px; margin-left: 3px; background: #f7f7f7; }
    .files { flex: 1; }
    .head { height: 67px; display: grid; grid-template-columns: 684px 360px 300px 200px; color: #4c607a; position: relative; }
    .head > .col { border-right: 1px solid #e3e3e3; padding: 3px 0 0 16px; display: flex; align-items: center; }
    .head > .first { padding-left: 64px; gap: 27px; }
    .caret { position: absolute; left: 366px; top: 5px; }
    .cb { width: 32px; height: 32px; box-sizing: border-box; border: 2px solid #858585; border-radius: 6px; background: #f5f5f5; margin-top: -3px; flex: none; }
    .cb.on { border: 0; background: #005fb8; display: flex; align-items: center; justify-content: center; margin-top: 2px; }
    .frow { margin: 15px 0 0 39px; width: 1495px; height: 68px; display: grid; grid-template-columns: 645px 360px 300px 190px; align-items: center; color: #6d6d6d; border-radius: 2px; }
    .frow + .frow { margin-top: 10px; }
    .frow.sel { background: #d9d9d9; }
    .frow > div { padding: 7px 0 0 16px; display: flex; align-items: center; }
    .frow > .nm { padding: 0 0 0 10px; color: #1a1a1a; }
    .nm > .pic { margin-left: 5px; }
    .nm fit-label { margin: 9px 0 0 11px; }
    .frow > .sz { padding: 7px 11px 0 0; justify-content: flex-end; }
    .gapcb { width: 32px; flex: none; }
    .status { height: 58px; display: flex; align-items: center; padding-left: 35px; color: #1e395b; }
    .status fit-label { padding-top: 3px; }
    .status .bar { width: 3px; height: 28px; background: #f0f0f0; margin: 0 26px 0 27px; }
    .views { margin-left: auto; display: flex; align-self: stretch; padding-right: 19px; gap: 8px; }
    .view { width: 55px; height: 58px; box-sizing: border-box; border: 1px solid #26a0da; background: #cce8f6; display: flex; align-items: center; justify-content: center; }
    .chip { width: 40px; height: 40px; border-radius: 4px; background: #e2eef5; display: flex; align-items: center; justify-content: center; flex: none; }
    .view .chip { margin: 3px 0 0 5px; }
    .chip.lite { background: #f3f3f3; margin-top: 9px; }
  `;
  render() {
    const small = () => chev("down", 14, 9, "#555", 1.6);
    return html`
      <div class="title">${folder()}<fit-label .w=${81}>abex2</fit-label><div class="ctl">${winMin()}${winMax()}${winClose()}</div></div>
      <div class="tools">
        ${newGlyph()}<fit-label class="m20" .w=${160}>새로 만들기</fit-label><div class="m17">${small()}</div>
        <div class="sep m44"></div><div class="m7"></div>
        ${[cutGlyph, copyGlyph, pasteGlyph, renameGlyph, shareGlyph, trashGlyph].map((g) => html`<div class="cell">${g()}</div>`)}
        <div class="sep m5"></div>
        <div class="m41">${sortGlyph()}</div><fit-label class="m20" .w=${58}>정렬</fit-label><div class="m17">${small()}</div>
        <div class="m73">${listGlyph()}</div><fit-label class="m20" .w=${58}>보기</fit-label><div class="m17">${small()}</div>
        <div class="sep m44"></div><div class="m41">${moreGlyph()}</div>
      </div>
      <div class="addr">
        ${navArrow("#555", false)}<div class="fw">${navArrow("#9a9a9a", true)}</div><div class="dn">${chev("down", 18, 11, "#777", 1.8)}</div><div class="up">${upArrow()}</div>
        <div class="box path">${folder()}
          ${PATH.map(([t, w]) => html`${chev("right", 11, 17, "#666", 3)}<fit-label .w=${w}>${t}</fit-label>`)}
          <div class="end">${chev("down", 26, 15, "#666", 2.2)}${refreshGlyph()}</div></div>
        <div class="box find">${findGlyph()}<fit-label .w=${155}>abex2 검색</fit-label></div>
      </div>
      <div class="mid">
        <div class="nav">${NAV.map((n) => html`<div class=${classMap({ nrow: true, in: n.lvl === 1, gap: !!n.gap, sel: !!n.sel })}>
          <div class="nchev">${n.state === "open" ? chev("down", 24, 14, "#1b1b1b", 2.6) : n.state === "closed" ? chev("right", 15, 24, "#868686", 2.2) : nothing}</div>
          ${n.icon()}<fit-label .w=${n.w}>${n.text}</fit-label></div>`)}</div>
        <div class="track"><div class="thumb"></div></div><div class="edge"></div>
        <div class="files">
          <div class="head"><div class="col first"><span class="cb"></span><fit-label .w=${58}>이름</fit-label></div><div class="col"><fit-label .w=${161}>수정한 날짜</fit-label></div><div class="col"><fit-label .w=${58}>유형</fit-label></div><div class="col"><fit-label .w=${58}>크기</fit-label></div>
            <div class="caret">${chev("up", 15, 9, "#555", 1.5)}</div></div>
          <div class="frow sel"><div class="nm"><span class="cb on">${tick()}</span>${vbIcon(39, 39)}<fit-label .w=${192}>abexcrackme2</fit-label></div>
            <div><fit-label .w=${300}>2022-01-09 오후 9:33</fit-label></div><div><fit-label .w=${189}>응용 프로그램</fit-label></div><div class="sz"><fit-label .w=${70}>24KB</fit-label></div></div>
          <div class="frow"><div class="nm"><span class="gapcb"></span>${sysIcon()}<fit-label .w=${120}>l2cabxc2</fit-label></div>
            <div><fit-label .w=${300}>2022-01-09 오후 9:33</fit-label></div><div><fit-label .w=${231}>시스템 정보 파일</fit-label></div><div class="sz"><fit-label .w=${53}>4KB</fit-label></div></div>
        </div>
      </div>
      <div class="status"><fit-label .w=${118}>2개 항목</fit-label><div class="bar"></div><fit-label .w=${324}>1개 항목 선택함 24.0KB</fit-label><div class="bar"></div>
        <div class="views"><div class="view"><div class="chip">${pic(28, 28, svg`<path d="M0 3H28M0 11H28M0 19H28M0 27H28" stroke="#000" stroke-width="2"/>`)}</div></div>
          <div class="chip lite">${pic(28, 28, svg`<rect x="1" y="1" width="26" height="22" rx="1.500" stroke="#000" stroke-width="2" fill="#fff"/><path d="M0 27H28" stroke="#000" stroke-width="2"/>`)}</div></div></div>`;
  }
}

@customElement("crackme-dialog")
class CrackmeDialog extends LitElement {
  static styles = css`
    :host { display: flex; flex-direction: column; background: #000; color: #f00; font-family: "DejaVu Sans Mono", monospace; }
    .title { height: 77px; box-sizing: border-box; padding: 2px 0 0 61px; font-weight: 700; font-size: 46px; line-height: 75px; }
    .rule { height: 6px; box-sizing: border-box; background: #b9b9b9; border-bottom: 2px solid #777; border-top: 1px solid #555; }
    .body { flex: 1; display: flex; }
    .form { width: 464px; box-sizing: border-box; border-right: 6px solid #b0b0b0; padding: 15px 0 0 19px; font-family: "Liberation Sans", sans-serif; font-size: 28px; line-height: 30px; color: #e60000; }
    .field { width: 424px; height: 49px; box-sizing: border-box; border: 4px solid; border-color: #858585 #e9e9e9 #e9e9e9 #858585; background: #fff; margin: 12px 0 49px; }
    .btns { padding: 16px 0 0 35px; display: flex; flex-direction: column; gap: 37px; }
    .btn { width: 164px; height: 64px; box-sizing: border-box; background: #f0f0f0; border: 3px solid; border-color: #fff #8a8a8a #808080 #fff; border-bottom-width: 5px; color: #111; font: 28px/53px "Liberation Sans", sans-serif; display: flex; justify-content: center; }
    .btn.def { border-color: #fff #777 #696969 #fff; outline: 1px solid #777; outline-offset: -1px; }
    .ring { width: 142px; height: 42px; box-sizing: border-box; margin-top: 6px; border: 2px dotted #222; border-radius: 3px; display: flex; justify-content: center; line-height: 38px; }
    u { text-decoration-thickness: 2px; text-underline-offset: 4px; text-decoration-skip-ink: none; }
  `;
  render() {
    return html`<div class="title"><fit-label stretch .w=${551}>abex’ 2nd crackme</fit-label></div><div class="rule"></div>
      <div class="body"><div class="form"><fit-label stretch .w=${83}>Name:</fit-label><div class="field"></div><fit-label stretch .w=${80}>Serial</fit-label><div class="field"></div></div>
        <div class="btns"><div class="btn"><fit-label stretch .w=${86}><u>C</u>heck</fit-label></div><div class="btn"><fit-label stretch .w=${84}><u>A</u>bout</fit-label></div>
          <div class="btn def"><div class="ring"><fit-label stretch .w=${58}><u>Q</u>uit</fit-label></div></div></div></div>`;
  }
}

const APPS: { icon: () => unknown; mark?: string; tile?: string }[] = [
  { icon: tWin }, { icon: tSearch }, { icon: tTask }, { icon: tWidget }, { icon: tChat }, { icon: tFiles, mark: "run" }, { icon: tEdge }, { icon: tStore }, { icon: tL }, { icon: tMusic },
  { icon: () => notionLogo(52, 55), mark: "run" }, { icon: tTalk, mark: "alert", tile: "pink" }, { icon: tBug, mark: "run" }, { icon: () => vbIcon(58, 58), mark: "active", tile: "focus" },
];

@customElement("task-bar")
class TaskBar extends LitElement {
  static styles = css`
    :host { display: flex; align-items: stretch; box-sizing: border-box; color: #1b1b1b; font-size: 30px; line-height: 40px;
      background: linear-gradient(90deg, #d7dadd 0, #d5dce7 180px, #d5dce7 1150px, #d9d9dc 1350px, #d9d9dc 1600px, #d4dce9 1750px, #d5dae8 2000px, #dcd7e5 2200px, #dfd7e4 2450px, #e5d4e0 2700px, #e3d5e1 2950px, #e8d5df 3250px, #e8d6da 3600px, #e8d6da 100%); }
    .pic { display: block; flex: none; }
    .edge { position: absolute; left: 0; top: 0; width: 3200px; height: 3px; background: rgba(110,110,140,.17); }
    .apps { padding-left: 1151px; display: flex; align-items: center; }
    .app { width: 110px; height: 120px; display: flex; align-items: center; justify-content: center; position: relative; }
    .tile { width: 100px; height: 100px; border-radius: 10px; display: flex; align-items: center; justify-content: center; box-sizing: border-box; }
    .pink { background: #fbe6e8; }
    .focus { background: #f1ebf0; border: 2px solid #d9ccd5; border-bottom: 3px solid #c9bfc8; }
    .mark { position: absolute; bottom: 13px; height: 8px; width: 15px; border-radius: 4px; background: #7c7c82; }
    .mark.alert { background: #c42b1c; }
    .mark.active { background: #0078d4; width: 40px; }
    .tray { margin-left: auto; display: flex; align-items: center; padding-right: 48px; }
    .a { font: 400 50px/60px Roboto, sans-serif; margin: 2px 45px 0 46px; }
    .g20 { margin-left: 20px; } .g22 { margin-left: 22px; }
    .clock { display: flex; flex-direction: column; align-items: flex-end; margin: 1px 20px 0 37px; }
    .n { width: 40px; height: 40px; border-radius: 50%; background: #0078d4; color: #fff; text-align: center; font-size: 27px; }
  `;
  render() {
    return html`<div class="edge"></div><div class="apps">${APPS.map((a) => html`<div class="app"><div class="tile ${a.tile ?? ""}">${a.icon()}</div>${a.mark ? html`<div class="mark ${a.mark}"></div>` : nothing}</div>`)}</div>
      <div class="tray">${trayUp()}<fit-label class="a" stretch .w=${34}>A</fit-label>${wifi()}<div class="g20">${mute()}</div><div class="g22">${battery()}</div>
        <div class="clock"><fit-label .w=${125}>오후 5:58</fit-label><fit-label .w=${155}>2022-01-23</fit-label></div><div class="n">1</div></div>`;
  }
}

@customElement("app-root")
class AppRoot extends LitElement {
  static styles = css`
    :host { display: block; position: relative; width: 3840px; height: 2160px; overflow: hidden; background: #fff; font-family: "Open Sans", "Noto Sans CJK KR DemiLight", "Noto Sans CJK KR Light", "Noto Sans CJK KR", sans-serif; }
    notion-window { position: absolute; left: 0; top: 0; width: 3840px; height: 2040px; }
    .help { position: absolute; left: 3685px; top: 1887px; width: 90px; height: 90px; box-sizing: border-box; border: 2px solid #d5d5d5; border-radius: 50%; background: #fff; box-shadow: 0 4px 8px rgba(0,0,0,.08); text-align: center; font-size: 46px; line-height: 92px; color: #222; }
    explorer-window { position: absolute; left: 1006px; top: 456px; width: 2821px; height: 1487px; }
    crackme-dialog { position: absolute; left: 1575px; top: 888px; width: 690px; height: 383px; }
    task-bar { position: absolute; left: 0; top: 2040px; width: 3840px; height: 120px; }
  `;
  render() {
    return html`<notion-window></notion-window><div class="help">?</div><explorer-window></explorer-window><crackme-dialog></crackme-dialog><task-bar></task-bar>`;
  }
}
